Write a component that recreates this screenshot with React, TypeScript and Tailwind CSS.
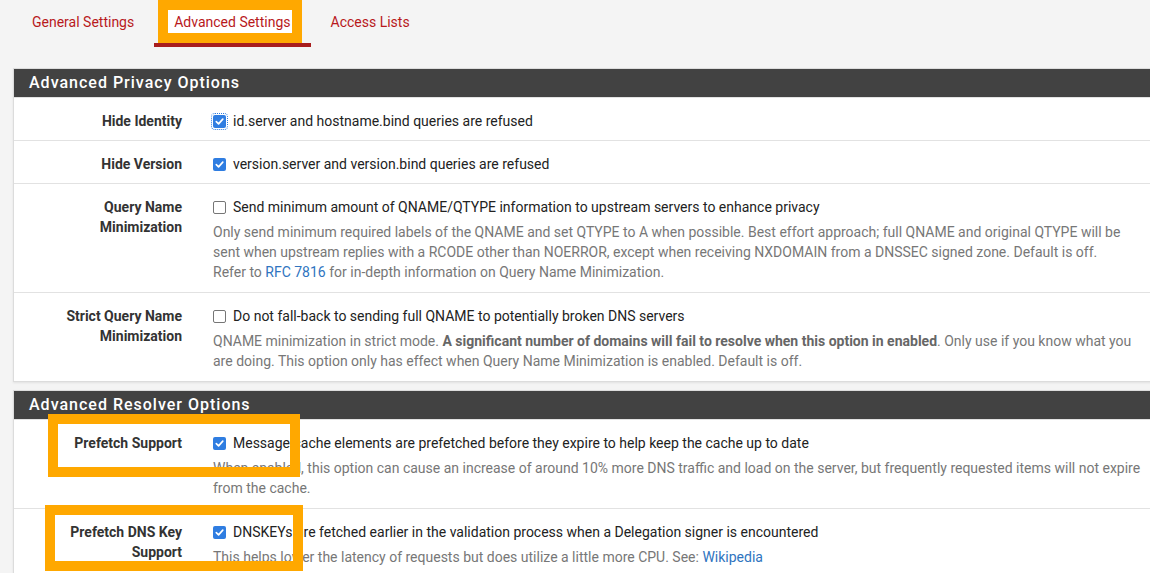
import React from 'react';

const Check: React.FC<{ checked?: boolean; focus?: boolean }> = ({ checked, focus }) => (
  <span
    className={`mt-[4px] flex h-[13px] w-[13px] flex-none items-center justify-center rounded-[2px] ${
      checked ? 'bg-[#2f7de1]' : 'border-[1.5px] border-[#767676] bg-white'
    } ${focus ? 'outline outline-1 outline-dotted outline-[#2f7de1] outline-offset-[1px]' : ''}`}
  >
    {checked && (
      <svg viewBox="0 0 12 12" className="h-[11px] w-[11px]">
        <path d="M2.5 6.2 L5 8.6 L9.6 3.4" fill="none" stroke="white" strokeWidth="1.8" strokeLinecap="round" strokeLinejoin="round" />
      </svg>
    )}
  </span>
);

type RowProps = {
  label: React.ReactNode;
  checked?: boolean;
  focus?: boolean;
  text: React.ReactNode;
  help?: React.ReactNode;
};

const Row: React.FC<RowProps> = ({ label, checked, focus, text, help }) => (
  <div className={`flex border-t border-[#e2e2e2] bg-white pt-[13px] ${help ? 'pb-[10px]' : 'pb-[9px]'}`}>
    <div className="w-[184px] flex-none pl-[15px] pr-[16px] text-right text-[14px] font-bold leading-[20px] text-[#333]">
      {label}
    </div>
    <div className="w-[935px] flex-none pl-[15px]">
      <div className="flex gap-[7px] text-[14px] leading-[20px] text-[#222]">
        <Check checked={checked} focus={focus} />
        <span className="whitespace-nowrap">{text}</span>
      </div>
      {help && <div className="mt-[5px] whitespace-nowrap text-[14px] leading-[20px] text-[#777]">{help}</div>}
    </div>
  </div>
);

const Panel: React.FC<{ title: string; children: React.ReactNode }> = ({ title, children }) => (
  <div className="ml-[13px] w-[1160px] border border-[#dcdcdc] bg-white shadow-[0_1px_2px_rgba(0,0,0,0.08)]">
    <div className="flex h-[28px] items-center bg-[#424242] pl-[15px] text-[16px] font-medium tracking-[1px] text-white">
      {title}
    </div>
    {children}
  </div>
);

export default function App() {
  const link = 'text-[#2f74c0]';
  return (
    <div
      className="relative h-[573px] w-[1150px] overflow-hidden bg-[#f4f4f4]"
      style={{ fontFamily: 'Roboto, "Liberation Sans", sans-serif' }}
    >
      {/* Tabs */}
      <div className="flex h-[47px] pl-[12px] text-[14px] text-[#b8191c]">
        <div className="flex items-start px-[20px] pt-[12px]">General Settings</div>
        <div className="relative flex items-start border-b-[4px] border-[#a81d1d] px-[20px] pt-[12px]">
          <div className="absolute left-[4px] top-0 h-[43px] w-[144px] border-[10px] border-[#ffa800] bg-white" />
          <span className="relative">Advanced Settings</span>
        </div>
        <div className="flex items-start px-[20px] pt-[12px]">Access Lists</div>
      </div>

      <div className="h-[21px]" />

      <Panel title="Advanced Privacy Options">
        <Row label="Hide Identity" checked focus text="id.server and hostname.bind queries are refused" />
        <Row label="Hide Version" checked text="version.server and version.bind queries are refused" />
        <Row
          label={<>Query Name<br />Minimization</>}
          text="Send minimum amount of QNAME/QTYPE information to upstream servers to enhance privacy"
          help={
            <>
              Only send minimum required labels of the QNAME and set QTYPE to A when possible. Best effort approach; full QNAME and original QTYPE will be
              <br />
              sent when upstream replies with a RCODE other than NOERROR, except when receiving NXDOMAIN from a DNSSEC signed zone. Default is off.
              <br />
              Refer to <span className={link}>RFC 7816</span> for in-depth information on Query Name Minimization.
            </>
          }
        />
        <Row
          label={<>Strict Query Name<br />Minimization</>}
          text="Do not fall-back to sending full QNAME to potentially broken DNS servers"
          help={
            <>
              QNAME minimization in strict mode.{' '}
              <b className="font-bold text-[#666]">A significant number of domains will fail to resolve when this option in enabled</b>. Only use if you know what you
              <br />
              are doing. This option only has effect when Query Name Minimization is enabled. Default is off.
            </>
          }
        />
      </Panel>

      <div className="h-[8px]" />

      <Panel title="Advanced Resolver Options">
        <Row
          label="Prefetch Support"
          checked
          text="Message cache elements are prefetched before they expire to help keep the cache up to date"
          help={
            <>
              When enabled, this option can cause an increase of around 10% more DNS traffic and load on the server, but frequently requested items will not expire
              <br />
              from the cache.
            </>
          }
        />
        <Row
          label={<>Prefetch DNS Key<br />Support</>}
          checked
          text="DNSKEYs are fetched earlier in the validation process when a Delegation signer is encountered"
          help={
            <>
              This helps lower the latency of requests but does utilize a little more CPU. See: <span className={link}>Wikipedia</span>
            </>
          }
        />
      </Panel>

      {/* annotation boxes */}
      <div className="pointer-events-none absolute left-[48px] top-[414px] h-[63px] w-[252px] border-[10px] border-[#ffa800]" />
      <div className="pointer-events-none absolute left-[45px] top-[505px] h-[66px] w-[258px] border-[10px] border-[#ffa800]" />
    </div>
  );
}
